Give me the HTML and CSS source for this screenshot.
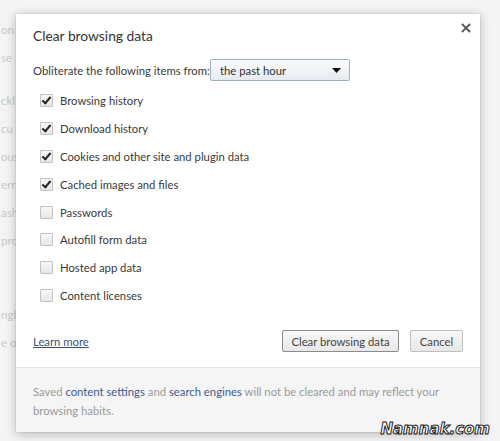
FILE: index.html
```html
<!DOCTYPE html>
<html>
<head>
<meta charset="utf-8">
<link rel="stylesheet" href="styles.css">
</head>
<body>
<div class="backdrop">
  <div class="bg-col">
    <span class="frag f1">on</span>
    <span class="frag f2">se</span>
    <span class="frag f3">ckl</span>
    <span class="frag">cu</span>
    <span class="frag">ous</span>
    <span class="frag">err</span>
    <span class="frag">ash</span>
    <span class="frag">pro</span>
    <span class="frag f9">ngl</span>
    <span class="frag">e o</span>
  </div>
</div>

<div class="dialog">
  <button class="close" aria-label="Close">
    <svg width="10" height="10" viewBox="0 0 10 10"><path d="M1.5 1.5 L8.5 8.5 M8.5 1.5 L1.5 8.5" stroke="#555" stroke-width="1.8" stroke-linecap="square"/></svg>
  </button>
  <div class="body">
    <h1 class="title">Clear browsing data</h1>
    <div class="from-row">
      <span class="from-label">Obliterate the following items from:</span>
      <div class="select">
        <span>the past hour</span>
        <svg width="9" height="5" viewBox="0 0 9 5"><path d="M0 0 H9 L4.5 5 Z" fill="#111"/></svg>
      </div>
    </div>
    <ul class="items">
      <li><span class="cb checked"></span>Browsing history</li>
      <li><span class="cb checked"></span>Download history</li>
      <li><span class="cb checked"></span>Cookies and other site and plugin data</li>
      <li><span class="cb checked"></span>Cached images and files</li>
      <li><span class="cb"></span>Passwords</li>
      <li><span class="cb"></span>Autofill form data</li>
      <li><span class="cb"></span>Hosted app data</li>
      <li><span class="cb"></span>Content licenses</li>
    </ul>
    <div class="actions">
      <a class="learn" href="#">Learn more</a>
      <div class="buttons">
        <button class="btn default">Clear browsing data</button>
        <button class="btn cancel">Cancel</button>
      </div>
    </div>
  </div>
  <p class="footer">Saved <a href="#">content settings</a> and <a href="#">search engines</a> will not be cleared and may reflect your browsing habits.</p>
</div>

<div class="watermark">Namnak.com</div>
</body>
</html>
```

FILE: styles.css
```css
html, body {
  margin: 0;
  padding: 0;
}
body {
  width: 500px;
  height: 441px;
  overflow: hidden;
  background: #f4f4f4;
  font-family: Lato, "Noto Sans", sans-serif;
  color: #3a3a3a;
  position: relative;
}
.backdrop {
  height: 441px;
}
.bg-col {
  display: flex;
  flex-direction: column;
  padding-top: 20px;
  font-size: 11.5px;
  color: #c9c9c9;
}
.frag {
  height: 28px;
  line-height: 20px;
  padding-left: 1px;
}
.f3 { margin-top: 15px; }
.f9 { margin-top: 46px; }

.dialog {
  position: absolute;
  left: 16px;
  top: 14px;
  width: 464px;
  height: 418px;
  background: #fff;
  box-shadow: 0 2px 10px rgba(0,0,0,0.25), 0 0 1px rgba(0,0,0,0.3);
  display: flex;
  flex-direction: column;
}
.close {
  position: absolute;
  right: 9px;
  top: 9px;
  width: 10px;
  height: 10px;
  padding: 0;
  border: 0;
  background: none;
  line-height: 0;
}
.body {
  flex: 1;
  padding: 12px 17px 0 17px;
}
.title {
  margin: 0;
  font-size: 13.8px;
  font-weight: normal;
  line-height: 20px;
  color: #333;
}
.from-row {
  margin-top: 13px;
  display: flex;
  align-items: center;
  font-size: 11.3px;
  height: 22px;
}
.from-label {
  width: 177px;
}
.select {
  width: 121px;
  height: 20px;
  border: 1px solid #9fb0c8;
  border-radius: 2px;
  background: linear-gradient(#fbfcfd, #e6eaf0);
  display: flex;
  align-items: center;
  justify-content: space-between;
  padding: 0 8px 0 9px;
  box-sizing: content-box;
}
.select span { color: #333; }
.items {
  list-style: none;
  margin: 6px 0 0 0;
  padding: 0 0 0 7px;
}
.items li {
  height: 27.8px;
  display: flex;
  align-items: center;
  font-size: 11.3px;
}
.cb {
  width: 11px;
  height: 11px;
  border: 1px solid #c2c2c2;
  border-radius: 1px;
  background: linear-gradient(#f8f8f8, #e6e6e6);
  margin-right: 7px;
  position: relative;
  flex: none;
}
.cb.checked::after {
  content: "";
  position: absolute;
  left: 3px;
  top: 0px;
  width: 3px;
  height: 7px;
  border: solid #222;
  border-width: 0 2px 2px 0;
  transform: rotate(40deg);
}
.actions {
  margin-top: 21px;
  display: flex;
  align-items: center;
  justify-content: space-between;
  height: 22px;
}
.learn {
  font-size: 11.3px;
  color: #3b4f7a;
  text-decoration: underline;
}
.buttons {
  display: flex;
  gap: 11px;
}
.btn {
  height: 22px;
  padding: 0;
  font-family: inherit;
  font-size: 11.3px;
  color: #444;
  border: 1px solid #c0c0c0;
  border-radius: 2px;
  background: linear-gradient(#f8f8f8, #e8e8e8);
}
.btn.default {
  width: 117px;
  border-color: #8c8c8c;
}
.btn.cancel {
  width: 53px;
}
.footer {
  margin: 0;
  height: 65px;
  box-sizing: border-box;
  border-top: 1px solid #e4e4e4;
  background: #f5f5f5;
  padding: 14px 17px 0 17px;
  font-size: 11.3px;
  line-height: 19px;
  color: #9a9a9a;
}
.footer a {
  color: #3e5a91;
  text-decoration: none;
}
.watermark {
  position: absolute;
  right: 10px;
  bottom: 3px;
  font-family: "DejaVu Sans", sans-serif;
  font-weight: bold;
  font-style: italic;
  font-size: 15px;
  color: #fff;
  -webkit-text-stroke: 1px #222;
}
```
